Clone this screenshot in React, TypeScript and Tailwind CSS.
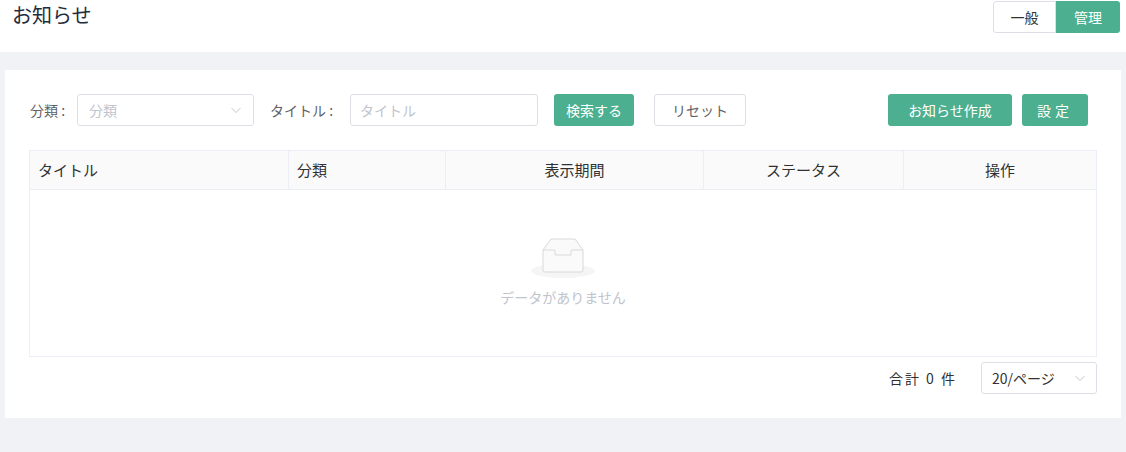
export default function App() {
  const f = { fontFamily: '"Noto Sans CJK JP", "Noto Sans", sans-serif' };
  const chev = (
    <svg width="12" height="12" viewBox="0 0 12 12" className="text-[#c0c4cc]"><path d="M1.5 4 L6 8.5 L10.5 4" fill="none" stroke="currentColor" strokeWidth="1" /></svg>
  );
  return (
    <div style={f} className="w-[1126px] h-[452px] bg-[#f0f2f5] text-[#303133] text-[14px] overflow-hidden">
      <div className="h-[52px] bg-white flex items-start justify-between pl-[12px] pr-[6px]">
        <div className="text-[20px] leading-none mt-[5px] text-[#1f2d3d]">お知らせ</div>
        <div className="flex mt-[1px] h-[32px]">
          <div className="w-[63px] flex items-center justify-center border border-[#dcdfe6] rounded-l-[3px]">一般</div>
          <div className="w-[64px] flex items-center justify-center bg-[#4caf8f] text-white rounded-r-[3px]">管理</div>
        </div>
      </div>
      <div className="mt-[18px] mx-[5px] bg-white h-[348px] px-[24px] pt-[24px]">
        <div className="flex items-center h-[32px]">
          <span className="ml-[1px] w-[47px] text-[#606266]">分類 :</span>
          <div className="w-[177px] h-[32px] border border-[#dcdfe6] rounded-[3px] flex items-center justify-between px-[11px] text-[#c0c4cc]">分類{chev}</div>
          <span className="ml-[16px] w-[80px] text-[#606266]">タイトル :</span>
          <div className="w-[188px] h-[32px] border border-[#dcdfe6] rounded-[3px] flex items-center px-[9px] text-[#c0c4cc]">タイトル</div>
          <div className="ml-[16px] w-[80px] h-[32px] bg-[#4caf8f] text-white rounded-[3px] flex items-center justify-center">検索する</div>
          <div className="ml-[20px] w-[92px] h-[32px] border border-[#dcdfe6] rounded-[3px] flex items-center justify-center text-[#606266]">リセット</div>
          <div className="ml-auto w-[124px] h-[32px] bg-[#4caf8f] text-white rounded-[3px] flex items-center justify-center">お知らせ作成</div>
          <div className="ml-[10px] mr-[9px] w-[66px] h-[32px] bg-[#4caf8f] text-white rounded-[3px] flex items-center justify-center tracking-[4px]">設定</div>
        </div>
        <div className="mt-[24px] border border-[#ebeef5] h-[207px] flex flex-col">
          <div className="flex h-[39px] bg-[#fafafa] border-b border-[#ebeef5] text-[15px]">
            <div className="w-[259px] border-r border-[#ebeef5] flex items-center pl-[8px]">タイトル</div>
            <div className="w-[157px] border-r border-[#ebeef5] flex items-center pl-[8px]">分類</div>
            <div className="w-[258px] border-r border-[#ebeef5] flex items-center justify-center">表示期間</div>
            <div className="w-[200px] border-r border-[#ebeef5] flex items-center justify-center">ステータス</div>
            <div className="flex-1 flex items-center justify-center">操作</div>
          </div>
          <div className="flex-1 flex flex-col items-center pt-[46px]">
            <svg width="64" height="42" viewBox="0 0 64 42">
              <ellipse cx="32" cy="35" rx="32" ry="7" fill="#f5f5f5" />
              <path d="M12 14 L20 3 H44 L52 14 V34 a2 2 0 0 1 -2 2 H14 a2 2 0 0 1 -2 -2 Z" fill="#fafafa" stroke="#d9d9d9" />
              <path d="M12 14 H23 a1 1 0 0 1 1 1 V19 H40 V15 a1 1 0 0 1 1 -1 H52" fill="none" stroke="#d9d9d9" />
            </svg>
            <div className="mt-[9px] text-[#c0c4cc] text-[14px]">データがありません</div>
          </div>
        </div>
        <div className="flex justify-end items-center mt-[5px] h-[32px]">
          <span className="text-[#303133] tracking-[2px] mr-[24px]">合計 0 件</span>
          <div className="w-[116px] h-[32px] border border-[#dcdfe6] rounded-[3px] flex items-center justify-between px-[10px]">20/ページ{chev}</div>
        </div>
      </div>
    </div>
  );
}
